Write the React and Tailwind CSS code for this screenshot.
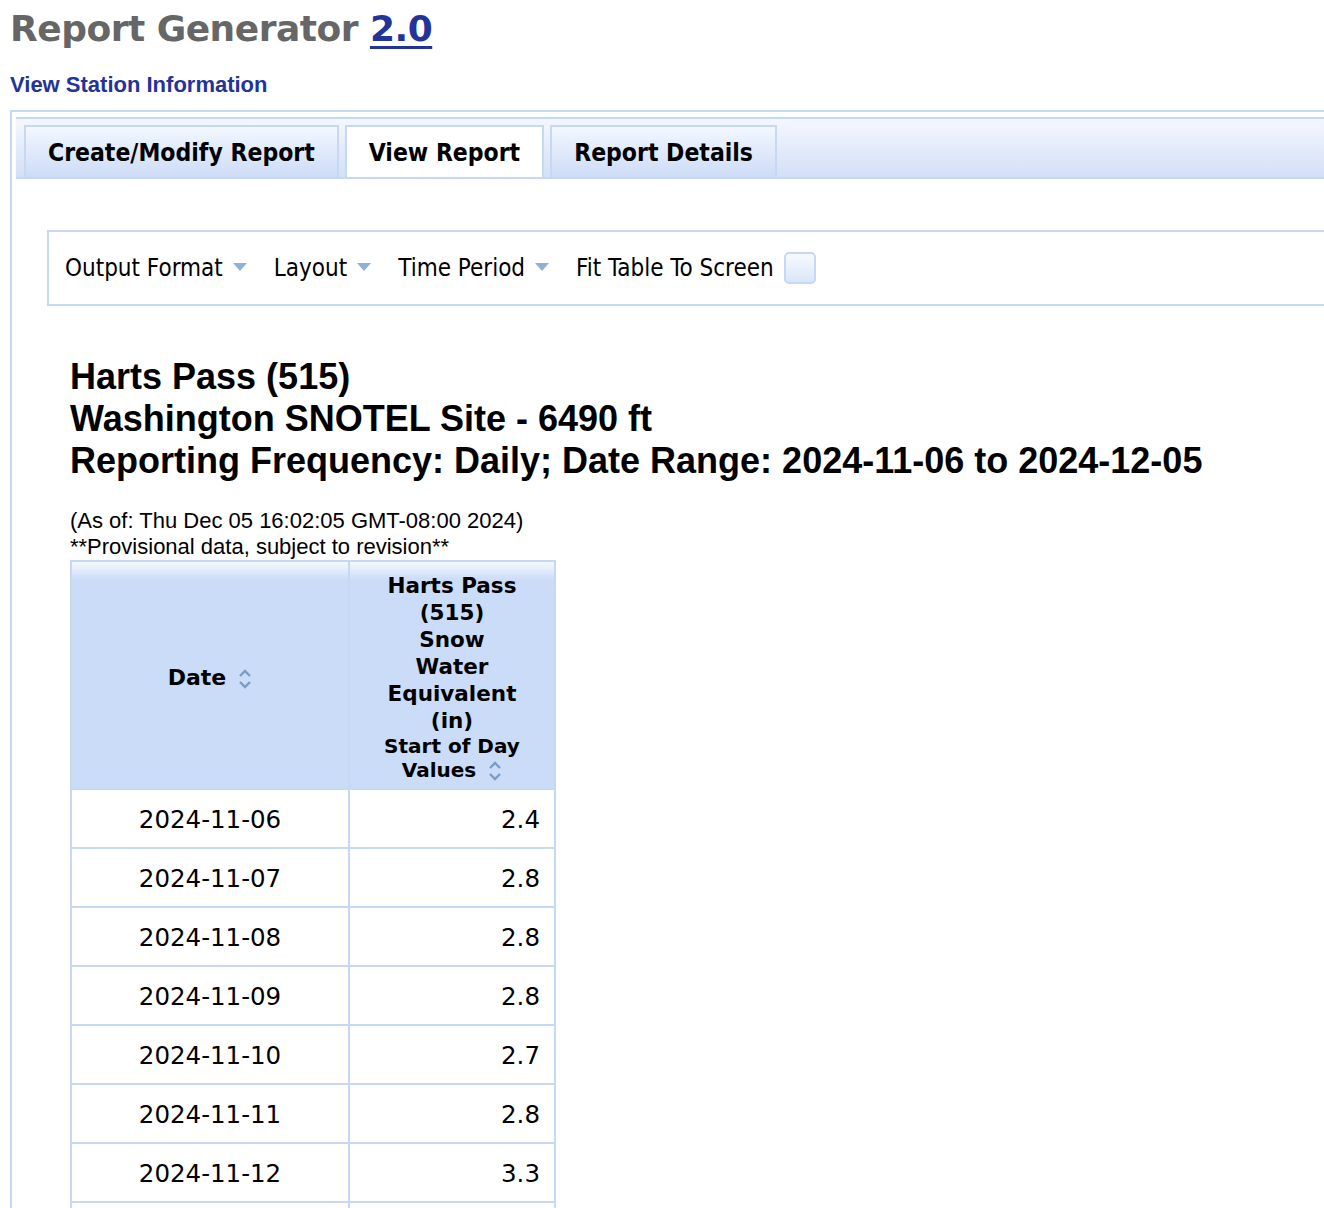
import React from 'react';

const rows = [
    ['2024-11-06', '2.4'],
    ['2024-11-07', '2.8'],
    ['2024-11-08', '2.8'],
    ['2024-11-09', '2.8'],
    ['2024-11-10', '2.7'],
    ['2024-11-11', '2.8'],
    ['2024-11-12', '3.3'],
    ['2024-11-13', '3.3'],
];

const SortIcon = () => (
    <svg width="14" height="22" viewBox="0 0 14 22" className="inline-block align-middle ml-3">
        <path d="M2 8 L7 3 L12 8" fill="none" stroke="#7a9cc8" strokeWidth="2.4" />
        <path d="M2 14 L7 19 L12 14" fill="none" stroke="#7a9cc8" strokeWidth="2.4" />
    </svg>
);

const Caret = () => (
    <svg width="14" height="8" viewBox="0 0 14 8" className="inline-block ml-[10px] mb-[3px]">
        <path d="M0 0 L14 0 L7 8 Z" fill="#8fb0d9" />
    </svg>
);

const Tab = ({ label, active }) => (
    <div
        className={`flex h-[52px] items-center border-2 border-b-0 border-[#c6d8f3] px-[22px] pt-[2px] text-[24.5px] font-bold text-black ${
            active ? 'bg-white' : 'bg-gradient-to-b from-[#f3f7ff] to-[#cddcf6]'
        }`}
    >
        {label}
    </div>
);

export default function App() {
    return (
        <div className="min-h-screen bg-white pl-[10px] font-['Liberation_Sans',Arial,sans-serif] text-black">
            <h1 className="pt-[6px] font-['DejaVu_Sans',Verdana,sans-serif] text-[36px] leading-[46px] font-bold tracking-[-0.5px] text-[#666]">
                Report Generator <a className="text-[#22339a] underline decoration-[3px] underline-offset-[5px]">2.0</a>
            </h1>
            <div className="mt-[20px] text-[22px] leading-[26px] font-bold text-[#22339a]">View Station Information</div>

            <div className="mt-[12px] border-t-2 border-l-2 border-[#c6d8f3] pt-[5px] pl-[4px]">
                <div className="flex gap-[6px] border-y-2 border-[#c6d8f3] bg-gradient-to-b from-[#f4f7ff] to-[#d3e0f6] pt-[6px] pl-[8px] font-['DejaVu_Sans',Tahoma,sans-serif] [font-stretch:condensed]">
                    <Tab label="Create/Modify Report" />
                    <Tab label="View Report" active />
                    <Tab label="Report Details" />
                </div>

                <div className="ml-[31px] mt-[51px] flex h-[76px] items-center gap-[27px] border-y-2 border-l-2 border-[#c6d8f3] pl-[16px] font-['DejaVu_Sans',Tahoma,sans-serif] text-[24px] [font-stretch:condensed]">
                    <span className="flex items-center">Output Format<Caret /></span>
                    <span className="flex items-center">Layout<Caret /></span>
                    <span className="flex items-center">Time Period<Caret /></span>
                    <span className="flex items-center gap-[10px]">
                        Fit Table To Screen
                        <span className="h-[32px] w-[32px] rounded-[5px] border-2 border-[#c6d8f3] bg-gradient-to-b from-[#f7f9ff] to-[#dbe6fa]" />
                    </span>
                </div>

                <div className="ml-[54px] pt-[50px]">
                    <div className="text-[36px] leading-[42px] font-bold">
                        <div>Harts Pass (515)</div>
                        <div>Washington SNOTEL Site - 6490 ft</div>
                        <div>Reporting Frequency: Daily; Date Range: 2024-11-06 to 2024-12-05</div>
                    </div>
                    <div className="mt-[26px] text-[22px] leading-[26px]">
                        <div>(As of: Thu Dec 05 16:02:05 GMT-08:00 2024)</div>
                        <div>**Provisional data, subject to revision**</div>
                    </div>

                    <table className="border-collapse font-['DejaVu_Sans',Verdana,sans-serif]">
                        <thead>
                            <tr className="bg-[#cadcf8]">
                                <th className="h-[228px] w-[278px] border-2 border-[#c6d8f3] bg-gradient-to-b from-[#f4f8ff] from-0% to-[#cadcf8] to-[8%] pt-[4px] text-[22px] font-bold">
                                    Date<SortIcon />
                                </th>
                                <th className="w-[206px] border-2 border-[#c6d8f3] bg-gradient-to-b from-[#f4f8ff] from-0% to-[#cadcf8] to-[8%] px-[8px] pt-[4px] text-center font-bold">
                                    <div className="text-[21.5px] leading-[27px]">
                                        <div>Harts Pass</div>
                                        <div>(515)</div>
                                        <div>Snow</div>
                                        <div>Water</div>
                                        <div>Equivalent</div>
                                        <div>(in)</div>
                                    </div>
                                    <div className="text-[20px] leading-[24px]">
                                        <div>Start of Day</div>
                                        <div>Values<SortIcon /></div>
                                    </div>
                                </th>
                            </tr>
                        </thead>
                        <tbody>
                            {rows.map(([d, v]) => (
                                <tr key={d}>
                                    <td className="h-[59px] border-2 border-[#c6d8f3] pt-[4px] text-center text-[24.5px]">{d}</td>
                                    <td className="border-2 border-[#c6d8f3] pt-[4px] pr-[14px] text-right text-[24.5px]">{v}</td>
                                </tr>
                            ))}
                        </tbody>
                    </table>
                </div>
            </div>
        </div>
    );
}
